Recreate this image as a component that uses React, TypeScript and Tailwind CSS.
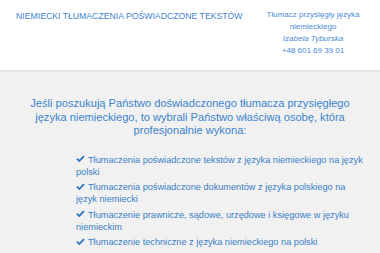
const items = [
  'Tłumaczenia poświadczone tekstów z języka niemieckiego na język polski',
  'Tłumaczenia poświadczone dokumentów z języka polskiego na język niemiecki',
  'Tłumaczenie prawnicze, sądowe, urzędowe i księgowe w języku niemieckim',
  'Tłumaczenie techniczne z języka niemieckiego na polski',
]

function Check() {
  return (
    <svg viewBox="0 0 12 10" className="inline-block w-[9px] h-[8px] mr-[3px] -mt-[2px] align-middle">
      <path d="M0.3 5.4 L2.1 3.6 L4.4 5.9 L9.7 0.3 L11.6 2.1 L4.4 9.4 Z" fill="#2f74c0" />
    </svg>
  )
}

export default function App() {
  return (
    <div className="w-[380px] h-[253px] overflow-hidden bg-[#f1f1f1] font-['Liberation_Sans',Arial,sans-serif]">
      <header className="h-[72px] bg-white border-b-2 border-[#e4e4e4] flex justify-between">
        <div className="pl-[16px] pt-[11px] text-[8.7px] leading-[10px] text-[#3f82cc] whitespace-nowrap">
          NIEMIECKI TŁUMACZENIA POŚWIADCZONE TEKSTÓW
        </div>
        <div className="w-[120px] mr-[7px] pt-[9px] text-center text-[8px] leading-[12px] text-[#4a8bd4]">
          <p>Tłumacz przysięgły języka niemieckiego</p>
          <p className="italic">Izabela Tyburska</p>
          <p>+48 601 69 39 01</p>
        </div>
      </header>
      <main className="pt-[25px]">
        <h1 className="px-[20px] text-center text-[11.1px] leading-[13.5px] text-[#3b84cc]">
          Jeśli poszukują Państwo doświadczonego tłumacza przysięgłego języka niemieckiego, to wybrali Państwo właściwą osobę, która profesjonalnie wykona:
        </h1>
        <ul className="mt-[16px] ml-[76px] w-[292px] text-[9.2px] leading-[12px] text-[#3a7ec6]">
          {items.map((t) => (
            <li key={t} className="mb-[3.5px]">
              <Check />
              {t}
            </li>
          ))}
        </ul>
      </main>
    </div>
  )
}
